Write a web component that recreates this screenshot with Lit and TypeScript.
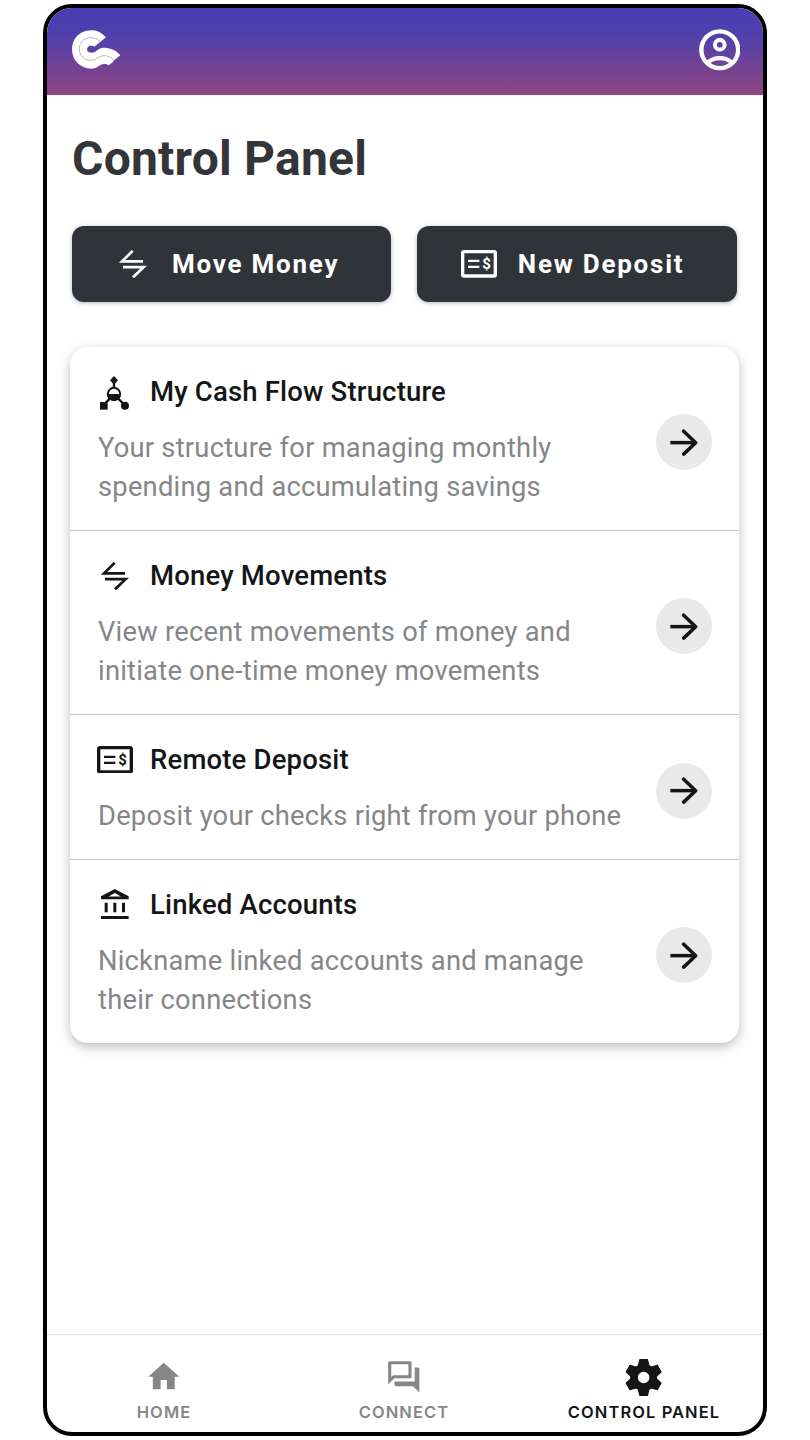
import { LitElement, html, css, svg } from "lit";
import { customElement } from "lit/decorators.js";

const logo = html`<svg class="logo" viewBox="96 91 146 117">
  <path fill="#fff" d="M198 113L183 100C172 93 163 92 152 92C120 92 96 117 96 149C96 182 121 207 153 207C168 207 172 202 180 197C188 192 198 192 206 197L218 188L222 182L241 167C228 150 208 144 190 144C178 145 172 151 166 156C158 161 148 160 143 155C139 150 141 142 148 139C154 137 160 139 163 141Z"/>
  <path fill="none" stroke="#5b5470" stroke-width="1.300" d="M180 125C172 117 163 114 152 114C132 114 118 129 118 149C118 168 133 182 153 182C170 182 176 169 190 168C203 167 213 173 221 181"/>
</svg>`;

const person = html`<svg class="person" viewBox="176 86 124 124" fill="none" stroke="#fff">
  <circle cx="238" cy="148" r="55" stroke-width="13"/>
  <circle cx="238" cy="133" r="14.500" stroke-width="12"/>
  <path stroke-width="12" d="M200 188C220 168 256 168 276 188"/>
</svg>`;

const swap = html`<svg class="swap" viewBox="178 104 84 84" fill="none" stroke="currentColor" stroke-width="8">
  <path d="M219 106.500L187 138H250"/><path d="M190 155.500H252L220 186"/>
</svg>`;

const check = html`<svg class="check" viewBox="168 104 108 83">
  <rect x="173" y="109" width="98" height="73" rx="4" fill="none" stroke="currentColor" stroke-width="10"/>
  <path d="M189 136.500H223M189 154.500H223" stroke="currentColor" stroke-width="7"/>
  <text class="dollar" x="245" y="161.500" text-anchor="middle" fill="currentColor">$</text>
</svg>`;

const tree = html`<svg class="tree" viewBox="121 109 88 102" fill="currentColor">
  <path d="M163 109L175 122L163 135L151 122Z"/>
  <path fill="none" stroke="currentColor" stroke-width="7" d="M163 130V146M151 176L134 194M175 176L195 196"/>
  <circle cx="163" cy="163" r="18.500" fill="#fff" stroke="currentColor" stroke-width="6"/>
  <path d="M143 163H183A20 20 0 0 1 143 163Z"/>
  <rect x="121" y="187" width="23" height="23"/><circle cx="196" cy="198" r="12"/>
</svg>`;

const bank = html`<svg class="bank" viewBox="122 567 84 91" fill="currentColor">
  <path fill-rule="evenodd" d="M163.500 567L205 589V598H122V589ZM145 589.500H182L163.500 579Z"/>
  <path d="M133 608H142V637H133ZM159 608H168V637H159ZM185 608H194V637H185ZM122 648H205V657.500H122Z"/>
</svg>`;

const arrow = html`<svg class="arrow" viewBox="121 115 84 82" fill="none" stroke="#131517" stroke-width="10.500">
  <path d="M122 156H198"/><path stroke-linecap="round" stroke-linejoin="round" d="M162 121.500L198 156L162 190.500"/>
</svg>`;

const home = html`<svg class="nav-icon" viewBox="0 0 24 24" fill="currentColor"><path d="M10 20v-6h4v6h5v-8h3L12 3 2 12h3v8z"/></svg>`;

const chat = html`<svg class="nav-icon" viewBox="0 0 24 24" fill="currentColor"><path d="M15 4v7H5.170L4 12.170V4h11m1-2H3c-.55 0-1 .45-1 1v14l4-4h10c.55 0 1-.45 1-1V3c0-.55-.45-1-1-1zm5 4h-2v9H6v2c0 .55.45 1 1 1h11l4 4V7c0-.55-.45-1-1-1z"/></svg>`;

const gear = html`<svg class="gear" viewBox="-58 -60 116 120" fill="currentColor">
  <path fill-rule="evenodd" d="M0-42A42 42 0 1 1 0 42A42 42 0 1 1 0-42ZM0-18A18 18 0 1 0 0 18A18 18 0 1 0 0-18Z"/>
  ${[0, 60, 120, 180, 240, 300].map(
    (a) => svg`<path transform="rotate(${a})" stroke="currentColor" stroke-width="5" stroke-linejoin="round" d="M-16-35L-11.500-55H11.500L16-35Z"/>`
  )}
</svg>`;

const rows = [
  { icon: tree, title: "My Cash Flow Structure", lines: ["Your structure for managing monthly", "spending and accumulating savings"] },
  { icon: swap, title: "Money Movements", lines: ["View recent movements of money and", "initiate one-time money movements"] },
  { icon: check, title: "Remote Deposit", lines: ["Deposit your checks right from your phone"] },
  { icon: bank, title: "Linked Accounts", lines: ["Nickname linked accounts and manage", "their connections"] },
];

@customElement("app-root")
export class AppRoot extends LitElement {
  static styles = css`
    :host { display: block; height: 1440px; box-sizing: border-box; padding: 3.5px 43px 4px 42.5px; background: #fff; font-family: Roboto, sans-serif; }
    * { box-sizing: border-box; }
    svg { display: block; flex: none; }
    .phone { height: 100%; border: 4px solid #000; border-radius: 29px; overflow: hidden; display: flex; flex-direction: column; background: #fff; }
    .header { height: 87.5px; flex: none; padding: 0 23px 3px 25.500px; display: flex; align-items: center; justify-content: space-between; background: linear-gradient(#4a3db4, #5040ac 30%, #8f4580); }
    .logo { width: 48.700px; height: 39px; }
    .person { width: 41.500px; height: 41.500px; }
    .main { flex: 1; padding: 36.400px 24.500px 0 23.500px; }
    .heading { margin: 0 0 0 2px; font-size: 48px; line-height: 56px; font-weight: 700; color: #333538; letter-spacing: 0.230px; }
    .buttons { display: grid; grid-template-columns: 319px 319.500px; gap: 26px; margin: 38.600px 0 45px 2px; }
    .button { height: 76px; border: 0; border-radius: 12px; background: #303338; color: #fff; font: 700 26px Roboto, sans-serif; letter-spacing: 1.760px; display: flex; align-items: center; padding: 0; box-shadow: 0 1px 4px rgba(20, 40, 50, .35); }
    .button .slot { width: 56.500px; margin-left: 43.500px; display: flex; }
    .button + .button .slot { width: 57.300px; }
    .button .swap { margin-left: 3.500px; }
    .swap { width: 28px; height: 28px; }
    .check { width: 36px; height: 27.700px; }
    .dollar { font: 700 45px Roboto, sans-serif; letter-spacing: 0; }
    .card { width: 669px; border-radius: 18px; background: #fff; box-shadow: 0 4px 12px rgba(0, 0, 0, .26); }
    .row { display: flex; align-items: center; padding: 25.800px 27px 23.300px 28px; border-top: 1px solid #c6c7c8; }
    .row:first-child { border-top: 0; }
    .copy { flex: 1; }
    .title { display: flex; align-items: center; height: 38px; font-size: 27.500px; font-weight: 500; letter-spacing: 0.170px; color: #131517; }
    .title .slot { width: 34px; margin-right: 18px; display: flex; justify-content: center; }
    .tree { width: 29.300px; height: 34px; margin-top: 3px; }
    .bank { width: 28px; height: 30.300px; margin-top: -1px; }
    .desc { margin-top: 18.700px; font-size: 27.300px; line-height: 38.500px; letter-spacing: 0.240px; color: #858688; white-space: nowrap; }
    .line { display: block; }
    .go { width: 56px; height: 56px; border-radius: 50%; background: #e9e9ea; display: flex; align-items: center; justify-content: center; margin-top: 5.500px; flex: none; }
    .arrow { width: 28px; height: 27.300px; }
    .nav { height: 98.500px; flex: none; border-top: 1px solid #dcdddd; }
    .tabs { display: grid; grid-template-columns: repeat(3, 240px); margin-left: -2.500px; }
    .tab { display: flex; flex-direction: column; align-items: center; padding-top: 22px; color: #868789; font: 600 16.500px/20px Inter, sans-serif; letter-spacing: 1.080px; }
    .tab.on { color: #131517; }
    .icon-box { height: 41px; display: flex; align-items: center; justify-content: center; margin-bottom: 4px; }
    .nav-icon { width: 37.500px; height: 37.500px; }
    .gear { width: 37.300px; height: 39px; }
  `;

  render() {
    return html`<div class="phone">
      <header class="header">${logo}${person}</header>
      <main class="main">
        <h1 class="heading">Control Panel</h1>
        <div class="buttons">
          <button class="button"><span class="slot">${swap}</span>Move Money</button>
          <button class="button"><span class="slot">${check}</span>New Deposit</button>
        </div>
        <section class="card">
          ${rows.map(
            (r) => html`<div class="row">
              <div class="copy">
                <div class="title"><span class="slot">${r.icon}</span>${r.title}</div>
                <div class="desc">${r.lines.map((l) => html`<span class="line">${l}</span>`)}</div>
              </div>
              <div class="go">${arrow}</div>
            </div>`
          )}
        </section>
      </main>
      <nav class="nav"><div class="tabs">
        <div class="tab"><span class="icon-box">${home}</span>HOME</div>
        <div class="tab"><span class="icon-box">${chat}</span>CONNECT</div>
        <div class="tab on"><span class="icon-box">${gear}</span>CONTROL PANEL</div>
      </div></nav>
    </div>`;
  }
}
